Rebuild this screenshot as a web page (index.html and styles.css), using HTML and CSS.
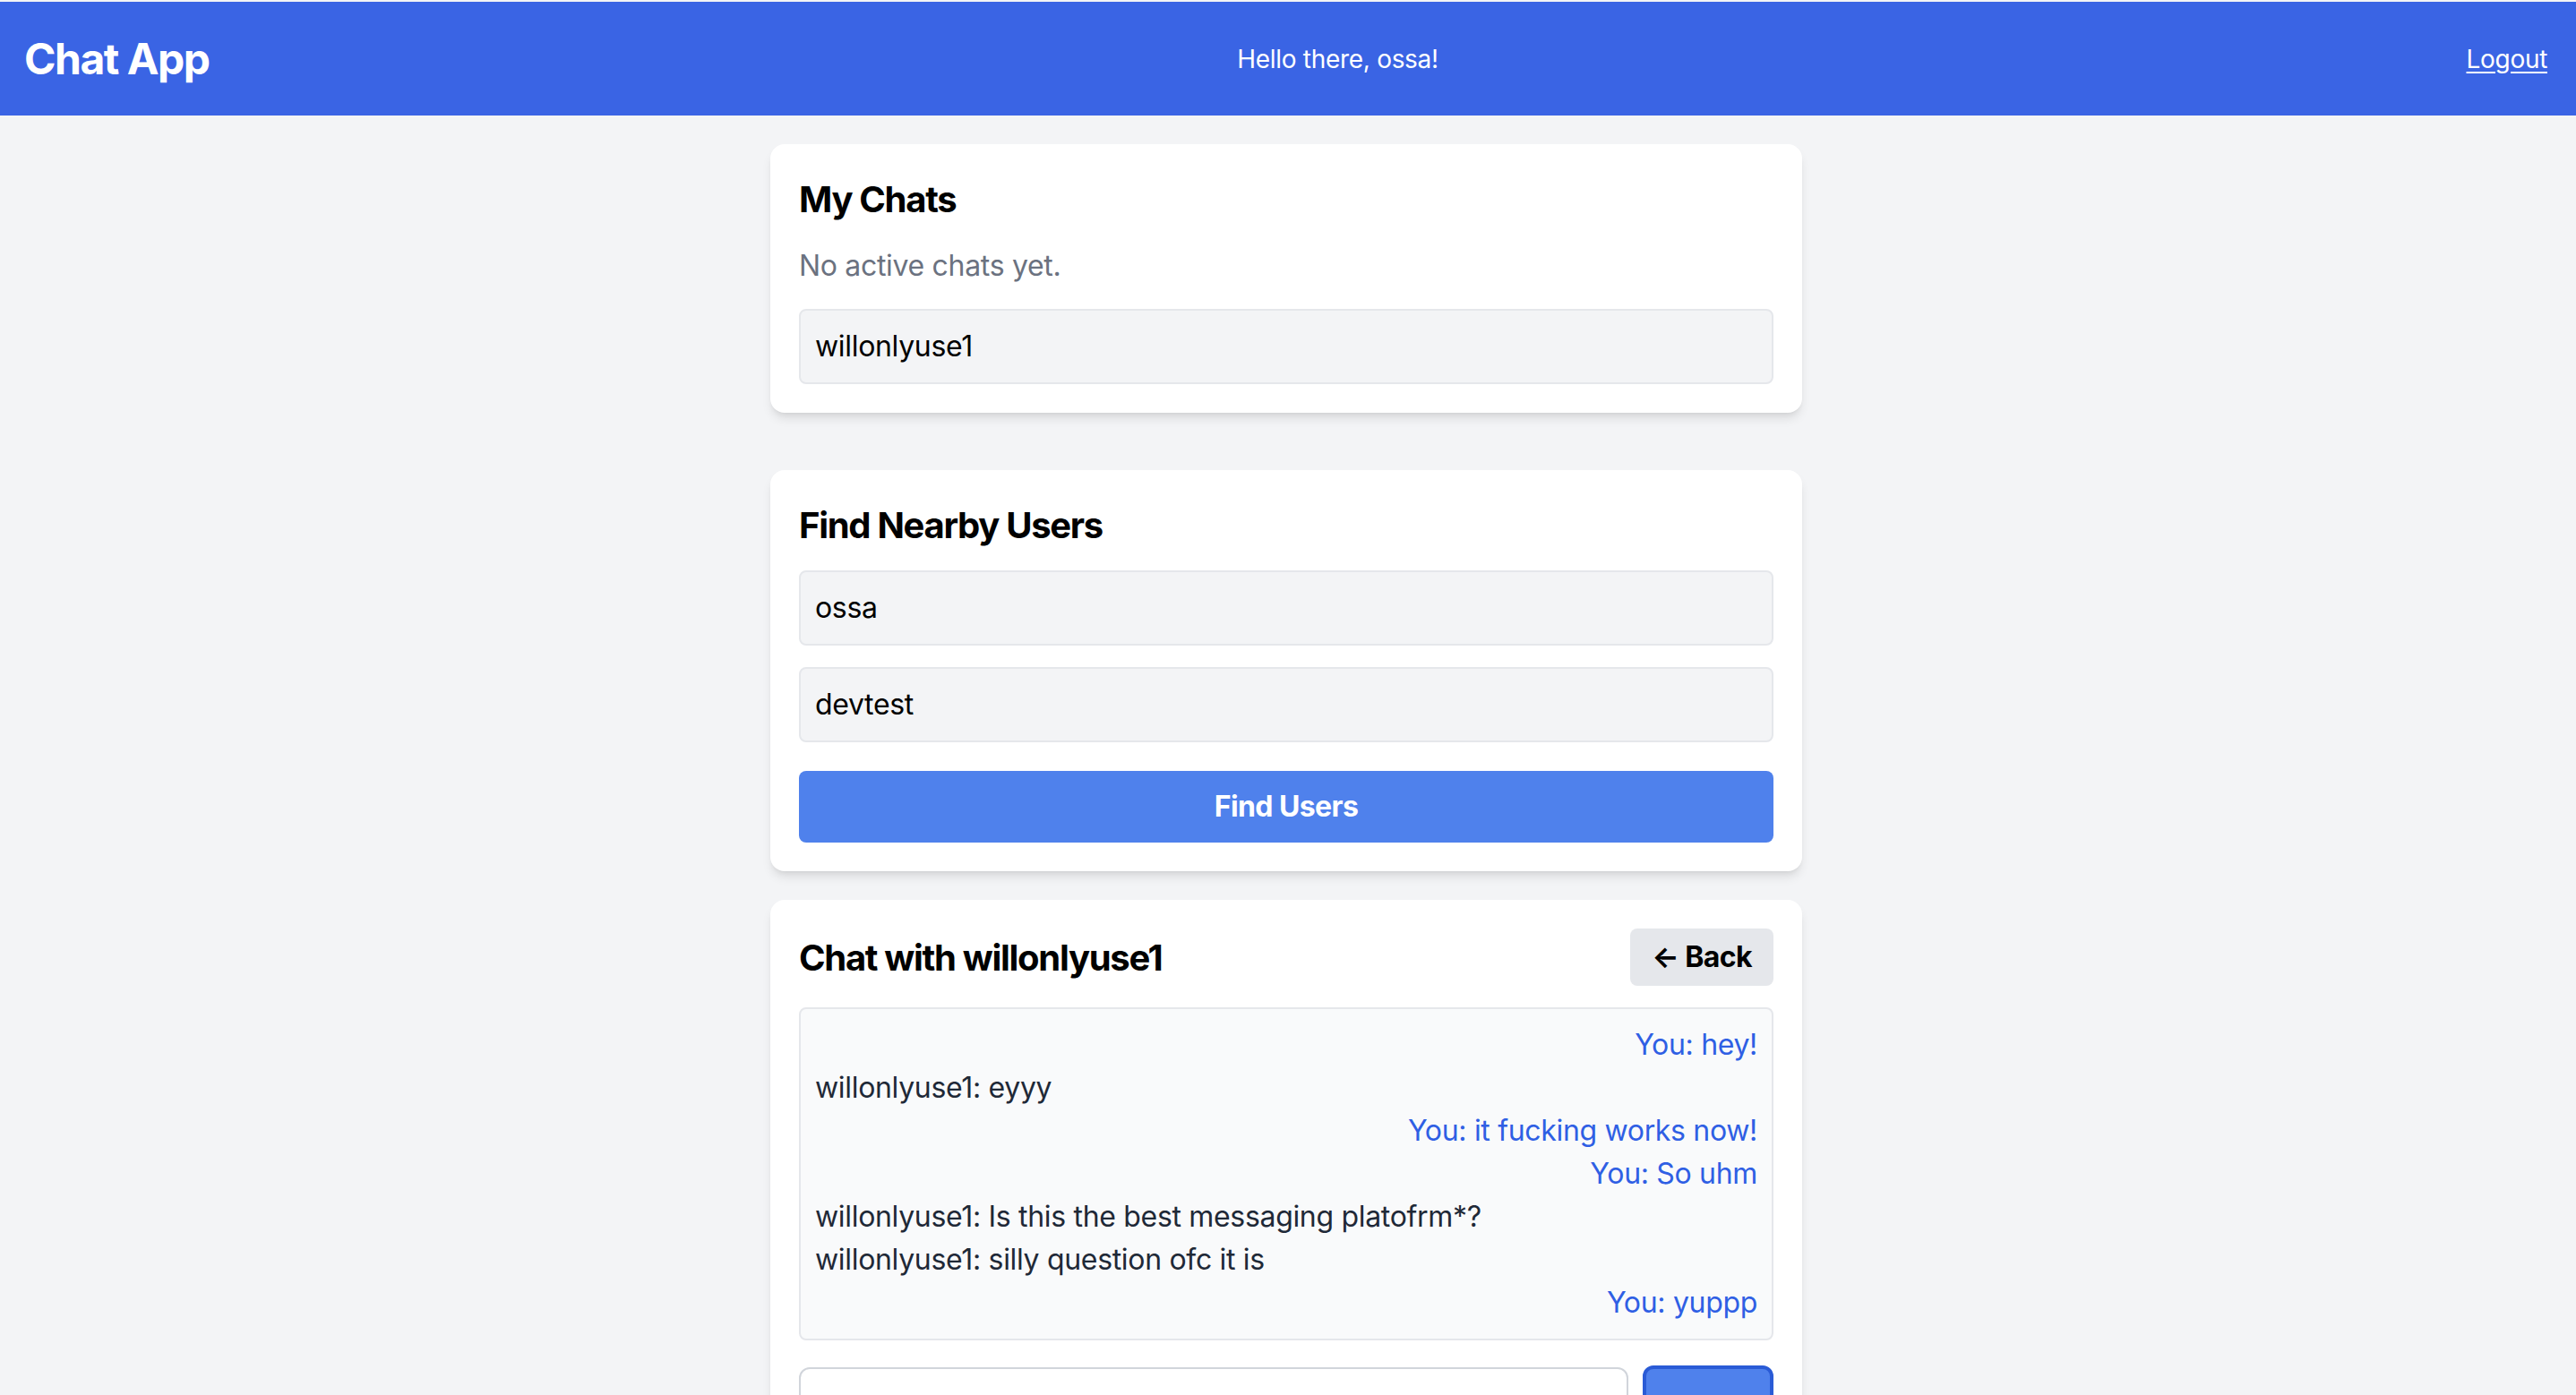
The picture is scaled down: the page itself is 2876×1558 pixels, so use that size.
FILE: index.html
```html
<!DOCTYPE html>
<html lang="en">
<head>
<meta charset="utf-8">
<title>Chat App</title>
<link rel="stylesheet" href="styles.css">
</head>
<body>
<header class="topbar">
  <div class="brand">Chat App</div>
  <div class="greeting">Hello there, ossa!</div>
  <a class="logout" href="#">Logout</a>
</header>
<main class="container">
  <section class="card card-chats">
    <h2 class="card-title">My Chats</h2>
    <p class="muted">No active chats yet.</p>
    <div class="field">willonlyuse1</div>
  </section>

  <section class="card">
    <h2 class="card-title">Find Nearby Users</h2>
    <div class="field">ossa</div>
    <div class="field">devtest</div>
    <button class="btn-primary">Find Users</button>
  </section>

  <section class="card">
    <div class="chat-head">
      <h2 class="card-title">Chat with willonlyuse1</h2>
      <button class="btn-back"><span class="arrow">←</span> Back</button>
    </div>
    <div class="messages">
      <div class="msg mine">You: hey!</div>
      <div class="msg">willonlyuse1: eyyy</div>
      <div class="msg mine">You: it fucking works now!</div>
      <div class="msg mine">You: So uhm</div>
      <div class="msg">willonlyuse1: Is this the best messaging platofrm*?</div>
      <div class="msg">willonlyuse1: silly question ofc it is</div>
      <div class="msg mine">You: yuppp</div>
    </div>
    <div class="compose">
      <div class="compose-input"></div>
      <button class="btn-send">Send</button>
    </div>
  </section>
</main>
</body>
</html>
```
FILE: styles.css
```css
* { box-sizing: border-box; }
html, body { margin: 0; padding: 0; }
body {
  background: #f3f4f6;
  font-family: Inter, "Noto Sans", "Liberation Sans", sans-serif;
  color: #000;
  padding-top: 2px;
  letter-spacing: -0.02em;
}
.topbar {
  height: 127px;
  background: #3a64e4;
  color: #fff;
  display: flex;
  align-items: center;
  justify-content: space-between;
  padding: 0 32px 0 27px;
}
.brand {
  font-size: 48px;
  font-weight: 700;
  letter-spacing: -1.5px;
}
.greeting {
  font-size: 28px;
  letter-spacing: -0.3px;
}
.logout {
  color: #fff;
  font-size: 28px;
  letter-spacing: -0.3px;
  text-decoration: underline;
  text-underline-offset: 4px;
}
.container {
  width: 1152px;
  margin: 32px 0 0 calc(50% - 578px);
}
.card {
  background: #fff;
  border-radius: 16px;
  padding: 32px;
  margin-bottom: 32px;
  box-shadow: 0 8px 12px -2px rgba(0,0,0,0.1), 0 4px 6px -4px rgba(0,0,0,0.1);
}
.card-chats { margin-bottom: 64px; }
.card-title {
  margin: 0 0 22px;
  padding-top: 2px;
  font-size: 40px;
  line-height: 56px;
  font-weight: 700;
  letter-spacing: -1.3px;
}
.muted {
  margin: 0 0 24px;
  font-size: 32px;
  line-height: 48px;
  color: #6b7280;
}
.field {
  background: #f3f4f6;
  border: 2px solid #e5e7eb;
  border-radius: 8px;
  padding: 16px 16px;
  font-size: 32px;
  line-height: 48px;
  margin-bottom: 24px;
}
.field:last-child { margin-bottom: 0; }
.btn-primary {
  display: block;
  width: 100%;
  margin-top: 32px;
  border: 0;
  border-radius: 8px;
  background: #4f81ec;
  color: #fff;
  font-family: inherit;
  font-size: 32px;
  font-weight: 700;
  letter-spacing: -0.6px;
  line-height: 48px;
  padding: 16px;
}
.chat-head {
  display: flex;
  align-items: center;
  justify-content: space-between;
  margin-bottom: 24px;
}
.chat-head .card-title { margin: 0; }
.btn-back {
  border: 0;
  border-radius: 8px;
  background: #e5e7eb;
  color: #000;
  font-family: inherit;
  font-size: 32px;
  font-weight: 700;
  letter-spacing: -0.6px;
  line-height: 48px;
  padding: 8px 24px;
}
.messages {
  background: #f9fafb;
  border: 2px solid #e5e7eb;
  border-radius: 8px;
  padding: 16px;
  display: flex;
  flex-direction: column;
}
.msg {
  font-size: 32px;
  line-height: 48px;
  color: #1f2937;
}
.msg.mine {
  text-align: right;
  color: #2f5fe4;
}
.compose {
  display: flex;
  gap: 16px;
  margin-top: 28px;
}
.compose-input {
  flex: 1;
  height: 84px;
  margin-top: 2px;
  background: #fff;
  border: 2px solid #d1d5db;
  border-radius: 12px;
}
.btn-send {
  width: 146px;
  border: 4px solid #2a5bd6;
  border-radius: 12px;
  background: #4f81ec;
  color: #fff;
  font-family: inherit;
  font-size: 32px;
  font-weight: 700;
  line-height: 48px;
  padding: 60px 0 20px;
}
```
